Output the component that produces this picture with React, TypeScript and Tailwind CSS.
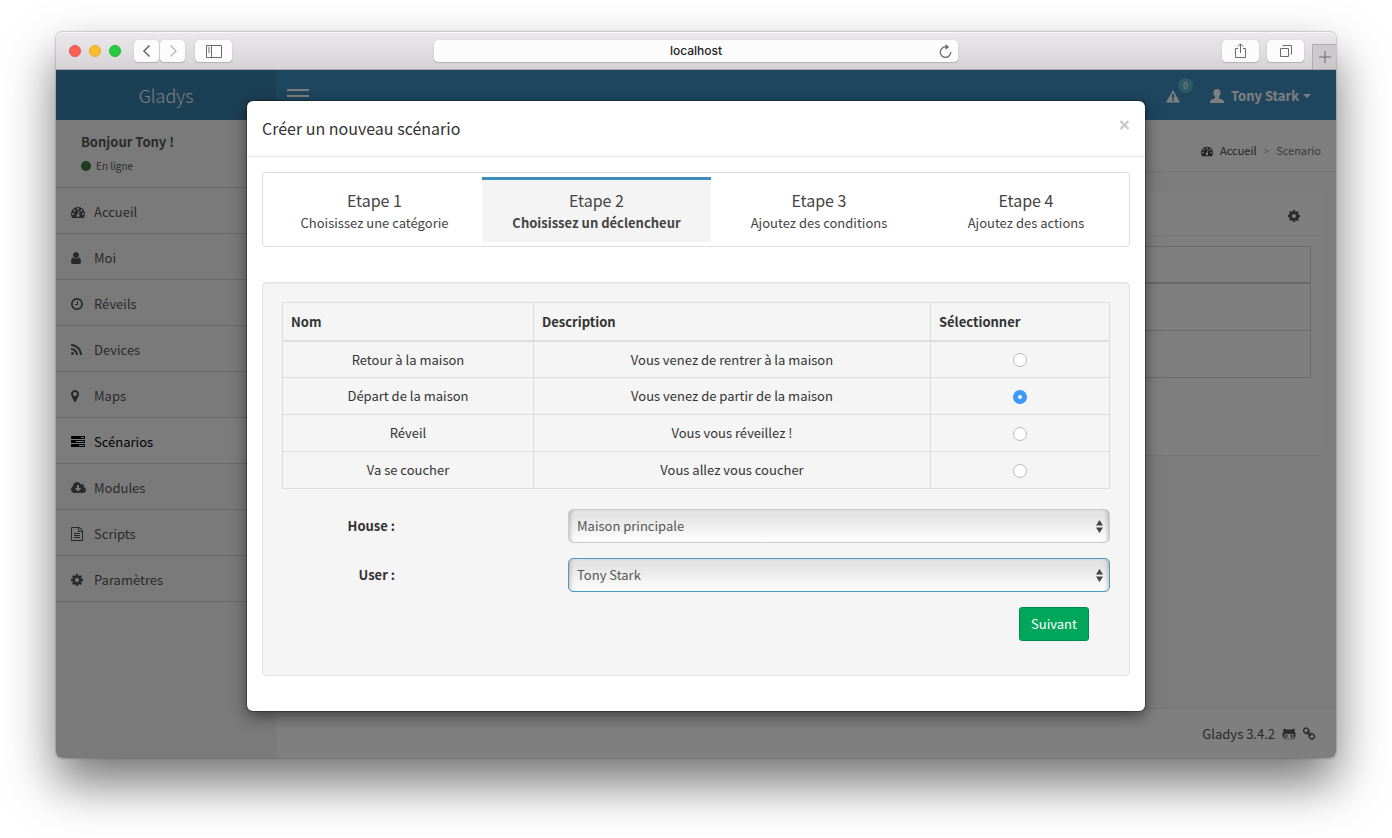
import { useState } from 'react'
import type { ReactNode } from 'react'
import { FaGithubAlt } from 'react-icons/fa'

interface GlyphProps {
  name: keyof typeof GLYPHS
  className?: string
}

// viewBox + path of each icon, 1792 units tall
const GLYPHS = {
  tachometer: {
    box: '0 0 1792 1792',
    d: 'M384 1152q0-53-37.5-90.5t-90.5-37.5-90.5 37.5-37.5 90.5 37.5 90.5 90.5 37.5 90.5-37.5 37.5-90.5zm192-448q0-53-37.5-90.5t-90.5-37.5-90.5 37.5-37.5 90.5 37.5 90.5 90.5 37.5 90.5-37.5 37.5-90.5zm428 481l101-382q6-26-7.5-48.5t-38.5-29.5-48 6.5-30 39.5l-101 382q-60 5-107 43.5t-63 98.5q-20 77 20 146t117 89 146-20 89-117q16-60-6-117t-72-91zm660-33q0-53-37.5-90.5t-90.5-37.5-90.5 37.5-37.5 90.5 37.5 90.5 90.5 37.5 90.5-37.5 37.5-90.5zm-640-640q0-53-37.5-90.5t-90.5-37.5-90.5 37.5-37.5 90.5 37.5 90.5 90.5 37.5 90.5-37.5 37.5-90.5zm448 192q0-53-37.5-90.5t-90.5-37.5-90.5 37.5-37.5 90.5 37.5 90.5 90.5 37.5 90.5-37.5 37.5-90.5zm320 448q0 261-141 483-19 29-54 29h-1402q-35 0-54-29-141-221-141-483 0-182 71-348t191-286 286-191 348-71 348 71 286 191 191 286 71 348z',
  },
  user: {
    box: '256 0 1280 1792',
    d: 'M1536 1399q0 109-62.5 187t-150.5 78h-854q-88 0-150.5-78t-62.5-187q0-85 8.5-160.5t31.5-152 58.5-131 94-89 134.5-34.5q131 128 313 128t313-128q76 0 134.5 34.5t94 89 58.5 131 31.5 152 8.5 160.5zm-256-887q0 159-112.5 271.5t-271.5 112.5-271.5-112.5-112.5-271.5 112.5-271.5 271.5-112.5 271.5 112.5 112.5 271.5z',
  },
  clock: {
    box: '128 0 1536 1792',
    d: 'M1024 544v448q0 14-9 23t-23 9h-320q-14 0-23-9t-9-23v-64q0-14 9-23t23-9h224v-352q0-14 9-23t23-9h64q14 0 23 9t9 23zm416 352q0-148-73-273t-198-198-273-73-273 73-198 198-73 273 73 273 198 198 273 73 273-73 198-198 73-273zm224 0q0 209-103 385.5t-279.5 279.5-385.5 103-385.5-103-279.5-279.5-103-385.5 103-385.5 279.5-279.5 385.5-103 385.5 103 279.5 279.5 103 385.5z',
  },
  rss: {
    box: '192 0 1408 1792',
    d: 'M576 1344q0 80-56 136t-136 56-136-56-56-136 56-136 136-56 136 56 56 136zm512 123q2 28-17 48-18 21-47 21h-135q-25 0-43-16.5t-20-41.5q-22-229-184.5-391.5t-391.5-184.5q-25-2-41.5-20t-16.5-43v-135q0-29 21-47 17-17 43-17h5q160 13 306 80.5t259 181.5q114 113 181.5 259t80.5 306zm512 2q2 27-18 47-18 20-46 20h-143q-26 0-44.5-17.5t-19.5-42.5q-12-215-101-408.5t-231.5-336-336-231.5-408.5-102q-25-1-42.5-19.5t-17.5-43.5v-143q0-28 20-46 18-18 44-18h3q262 13 501.5 120t425.5 294q187 186 294 425.5t120 501.5z',
  },
  marker: {
    box: '384 0 1024 1792',
    d: 'M1152 640q0-106-75-181t-181-75-181 75-75 181 75 181 181 75 181-75 75-181zm256 0q0 109-33 179l-364 774q-16 33-47.5 52t-67.5 19-67.5-19-46.5-52l-365-774q-33-70-33-179 0-212 150-362t362-150 362 150 150 362z',
  },
  tasks: {
    box: '0 0 1792 1792',
    d: 'M1024 1408h640v-128h-640v128zm-384-512h1024v-128h-1024v128zm640-512h384v-128h-384v128zm512 832v256q0 26-19 45t-45 19h-1664q-26 0-45-19t-19-45v-256q0-26 19-45t45-19h1664q26 0 45 19t19 45zm0-512v256q0 26-19 45t-45 19h-1664q-26 0-45-19t-19-45v-256q0-26 19-45t45-19h1664q26 0 45 19t19 45zm0-512v256q0 26-19 45t-45 19h-1664q-26 0-45-19t-19-45v-256q0-26 19-45t45-19h1664q26 0 45 19t19 45z',
  },
  cloud: {
    box: '-64 0 1920 1792',
    d: 'M1216 928q0-14-9-23t-23-9h-224v-352q0-13-9.5-22.5t-22.5-9.5h-192q-13 0-22.5 9.5t-9.5 22.5v352h-224q-13 0-22.5 9.5t-9.5 22.5q0 14 9 23l352 352q9 9 23 9t23-9l351-351q10-12 10-24zm640 224q0 159-112.5 271.5t-271.5 112.5h-1088q-185 0-316.5-131.5t-131.5-316.5q0-130 70-240t188-165q-2-30-2-43 0-212 150-362t362-150q156 0 285.5 87t188.5 231q71-62 166-62 106 0 181 75t75 181q0 76-41 138 130 31 213.5 135.5t83.5 238.5z',
  },
  file: {
    box: '128 0 1536 1792',
    d: 'M1596 380q28 28 48 76t20 88v1152q0 40-28 68t-68 28h-1344q-40 0-68-28t-28-68v-1600q0-40 28-68t68-28h896q40 0 88 20t76 48zm-444-244v376h376q-10-29-22-41l-313-313q-12-12-41-22zm384 1528v-1024h-416q-40 0-68-28t-28-68v-416h-768v1536h1280zm-1024-864q0-14 9-23t23-9h704q14 0 23 9t9 23v64q0 14-9 23t-23 9h-704q-14 0-23-9t-9-23v-64zm736 224q14 0 23 9t9 23v64q0 14-9 23t-23 9h-704q-14 0-23-9t-9-23v-64q0-14 9-23t23-9h704zm0 256q14 0 23 9t9 23v64q0 14-9 23t-23 9h-704q-14 0-23-9t-9-23v-64q0-14 9-23t23-9h704z',
  },
  cog: {
    box: '128 0 1536 1792',
    d: 'M1152 896q0-106-75-181t-181-75-181 75-75 181 75 181 181 75 181-75 75-181zm512-109v222q0 12-8 23t-20 13l-185 28q-19 54-39 91 35 50 107 138 10 12 10 25t-9 23q-27 37-99 108t-94 71q-12 0-26-9l-138-108q-44 23-91 38-16 136-29 186-7 28-36 28h-222q-14 0-24.5-8.5t-11.5-21.5l-28-184q-49-16-90-37l-141 107q-10 9-25 9-14 0-25-11-126-114-165-168-7-10-7-23 0-12 8-23 15-21 51-66.5t54-70.5q-27-50-41-99l-183-27q-13-2-21-12.5t-8-23.5v-222q0-12 8-23t19-13l186-28q14-46 39-92-40-57-107-138-10-12-10-24 0-10 9-23 26-36 98.5-107.5t94.5-71.5q13 0 26 10l138 107q44-23 91-38 16-136 29-186 7-28 36-28h222q14 0 24.5 8.5t11.5 21.5l28 184q49 16 90 37l142-107q9-9 24-9 13 0 25 10 129 119 165 170 7 8 7 22 0 12-8 23-15 21-51 66.5t-54 70.5q26 50 41 98l183 28q13 2 21 12.5t8 23.5z',
  },
  chain: {
    box: '64 0 1664 1792',
    d: 'M1456 1216q0-40-28-68l-208-208q-28-28-68-28-42 0-72 32 3 3 19 18.5t21.5 21.5 15 19 13 25.5 3.5 27.5q0 40-28 68t-68 28q-15 0-27.5-3.5t-25.5-13-19-15-21.5-21.5-18.5-19q-33 31-33 73 0 40 28 68l206 207q27 27 68 27 40 0 68-26l147-146q28-28 28-67zm-703-705q0-40-28-68l-206-207q-28-28-68-28-39 0-68 27l-147 146q-28 28-28 67 0 40 28 68l208 208q27 27 68 27 42 0 72-31-3-3-19-18.5t-21.5-21.5-15-19-13-25.5-3.5-27.5q0-40 28-68t68-28q15 0 27.5 3.5t25.5 13 19 15 21.5 21.5 18.5 19q33-31 33-73zm895 705q0 120-85 203l-147 146q-83 83-203 83-121 0-204-85l-206-207q-83-83-83-203 0-123 88-209l-88-88q-86 88-208 88-120 0-204-84l-208-208q-84-84-84-204t85-203l147-146q83-83 203-83 121 0 204 85l206 207q83 83 83 203 0 123-88 209l88 88q86-88 208-88 120 0 204 84l208 208q84 84 84 204z',
  },
} as const

const MENU: { label: string; icon: keyof typeof GLYPHS; active?: boolean }[] = [
  { label: 'Accueil', icon: 'tachometer' },
  { label: 'Moi', icon: 'user' },
  { label: 'Réveils', icon: 'clock' },
  { label: 'Devices', icon: 'rss' },
  { label: 'Maps', icon: 'marker' },
  { label: 'Scénarios', icon: 'tasks', active: true },
  { label: 'Modules', icon: 'cloud' },
  { label: 'Scripts', icon: 'file' },
  { label: 'Paramètres', icon: 'cog' },
]

const STEPS = [
  { title: 'Etape 1', text: 'Choisissez une catégorie' },
  { title: 'Etape 2', text: 'Choisissez un déclencheur' },
  { title: 'Etape 3', text: 'Ajoutez des conditions' },
  { title: 'Etape 4', text: 'Ajoutez des actions' },
]

const TRIGGERS = [
  { id: 'back-home', name: 'Retour à la maison', description: 'Vous venez de rentrer à la maison' },
  { id: 'left-home', name: 'Départ de la maison', description: 'Vous venez de partir de la maison' },
  { id: 'wake-up', name: 'Réveil', description: 'Vous vous réveillez !' },
  { id: 'going-to-sleep', name: 'Va se coucher', description: 'Vous allez vous coucher' },
]

function Glyph({ name, className = '' }: GlyphProps) {
  return (
    <svg viewBox={GLYPHS[name].box} className={`h-3.5 w-auto shrink-0 ${className}`} fill="currentColor" aria-hidden="true">
      <path d={GLYPHS[name].d} />
    </svg>
  )
}

function ChromeButton({ label, className, children }: { label: string; className: string; children: ReactNode }) {
  return (
    <button
      type="button"
      aria-label={label}
      className={`flex h-[22px] items-center justify-center rounded bg-[#fcfcfc] text-[#6b6b6b] shadow-[0_0_1px_rgba(0,0,0,0.3),0_1px_1px_rgba(0,0,0,0.15)] ${className}`}
    >
      {children}
    </button>
  )
}

function BrowserBar() {
  return (
    <div className="grid h-[38px] grid-cols-[1fr_minmax(0,524px)_1fr] items-center rounded-t-md border-b border-[#a9a7a9] bg-gradient-to-b from-[#ebe9eb] to-[#d6d3d6] pt-px shadow-[inset_0_1px_0_#f7f6f7]">
      <div className="flex items-center pl-[13px]">
        <div className="flex gap-2">
          <span className="size-3 rounded-full border border-[#e9534c] bg-[#fc5f58]" />
          <span className="size-3 rounded-full border border-[#e5a92c] bg-[#fdbe2e]" />
          <span className="size-3 rounded-full border border-[#22b537] bg-[#28cb41]" />
        </div>
        <div className="ml-[13px] flex gap-px">
          <ChromeButton label="Page précédente" className="w-[25px]">
            <svg width="14" height="14" viewBox="0 0 14 14" fill="none" stroke="currentColor" strokeWidth="1.6">
              <path d="M9.5 1.5L4 7l5.500 5.500" />
            </svg>
          </ChromeButton>
          <ChromeButton label="Page suivante" className="w-[25px]">
            <svg width="14" height="14" viewBox="0 0 14 14" fill="none" stroke="#b9b9b9" strokeWidth="1.4">
              <path d="M4.5 1.5L10 7l-5.500 5.500" />
            </svg>
          </ChromeButton>
        </div>
        <ChromeButton label="Barre latérale" className="ml-[10px] w-[37px]">
          <svg width="16" height="13" viewBox="0 0 16 13" fill="none" stroke="currentColor">
            <path d="M.5.5h15v12H.5zM5.5.5v12" />
            <path d="M2 3h2M2 5h2M2 7h2" />
          </svg>
        </ChromeButton>
      </div>
      <div className="grid h-[22px] items-center rounded bg-[#fcfcfc] shadow-[0_0_1px_rgba(0,0,0,0.3),0_1px_1px_rgba(0,0,0,0.15)]">
        <input
          type="text"
          aria-label="Adresse"
          defaultValue="localhost"
          className="col-start-1 row-start-1 w-full bg-transparent px-8 text-center font-[Inter,sans-serif] text-[12px] font-medium text-[#1d1d1d] outline-none"
        />
        <button type="button" aria-label="Recharger" className="col-start-1 row-start-1 mr-1.5 justify-self-end text-[#6b6b6b]">
          <svg width="13" height="14" viewBox="0 0 13 14" fill="none" stroke="currentColor" strokeWidth="1.3">
            <path d="M7 3A5.200 5.200 0 1 0 11.700 8" />
            <path d="M6.500 0L10.200 3 6.500 6z" fill="currentColor" stroke="none" />
          </svg>
        </button>
      </div>
      <div className="flex h-full items-center justify-end gap-2">
        <ChromeButton label="Partager" className="w-[37px]">
          <svg width="13" height="16" viewBox="0 0 13 16" fill="none" stroke="currentColor">
            <path d="M4 5.5H1.5v9h10v-9H9M6.5 10V1M3.8 3.5L6.5.8l2.700 2.700" />
          </svg>
        </ChromeButton>
        <ChromeButton label="Afficher les onglets" className="w-[37px]">
          <svg width="14" height="14" viewBox="0 0 14 14" fill="none" stroke="currentColor">
            <path d="M1.5 4.5h8v8h-8zM4 2.5v-1h8.500v8.500h-1" />
          </svg>
        </ChromeButton>
        <button
          type="button"
          aria-label="Nouvel onglet"
          className="flex h-[25px] w-6 items-center justify-center self-end border-t border-l border-[#b0aeb0] bg-[#cbc9cb] text-[#6b6b6b]"
        >
          <svg width="12" height="12" viewBox="0 0 12 12" stroke="currentColor">
            <path d="M6 0v12M0 6h12" />
          </svg>
        </button>
      </div>
    </div>
  )
}

function Sidebar() {
  return (
    <aside className="w-[220px] shrink-0 border-r border-[#f0f0f0] bg-[#f5f5f5] text-[#555]">
      <div className="h-[68px] border-b border-[#d2d2d2] pt-3 pl-[25px]">
        <p className="text-[13px] leading-5 font-bold">Bonjour Tony !</p>
        <a href="#statut" className="mt-1 flex items-center gap-[5px] text-[10px] leading-5">
          <span className="size-[10px] rounded-full bg-[#3c763d]" />
          En ligne
        </a>
      </div>
      <nav>
        {MENU.map((item) => (
          <a
            key={item.label}
            href="#menu"
            className={`flex h-[46px] items-center border-b border-[#d2d2d2] pt-0.5 pl-[15px] text-[13px] ${item.active ? 'bg-[#f9f9f9] text-black' : ''}`}
          >
            <span className="flex w-[23px]">
              <Glyph name={item.icon} />
            </span>
            {item.label}
          </a>
        ))}
      </nav>
    </aside>
  )
}

function Dashboard() {
  return (
    <div className="flex flex-col [grid-area:1/1]">
      <header className="flex h-[50px] shrink-0 text-white">
        <a href="#accueil" className="flex w-[220px] items-center justify-center bg-[#367fa9] text-[18px] font-light">
          Gladys
        </a>
        <div className="flex flex-1 items-center bg-[#3c8dbc] pt-0.5 pr-[25px]">
          <button type="button" aria-label="Menu" className="ml-[11px] flex w-[22px] flex-col gap-1">
            <span className="h-0.5 bg-white" />
            <span className="h-0.5 bg-white" />
            <span className="h-0.5 bg-white" />
          </button>
          <button type="button" aria-label="Notifications" className="relative ml-auto">
            <svg width="14" height="13" viewBox="0 0 14 13" fill="currentColor">
              <path fillRule="evenodd" d="M7 0l7 12.500H0zM6 4v4.500h2V4zM6 9.500v1.600h2V9.500z" />
            </svg>
            <span className="absolute -top-3 left-3 flex size-[15px] items-center justify-center rounded-full bg-[#5bb8d0] text-[9px] leading-none">
              0
            </span>
          </button>
          <button type="button" className="ml-[30px] flex items-center text-[13px] font-bold">
            <svg width="14" height="14" viewBox="0 0 14 14" fill="currentColor" className="mr-[7px]">
              <path d="M7 0c2.300 0 3.500 1.600 3.500 3.800 0 1.700-.8 3.400-1.700 4.200v1c1 .9 3.600 1.500 4.600 2.300.5.400.6 1.300.6 2.700H0c0-1.400.1-2.300.6-2.700 1-.8 3.600-1.400 4.600-2.300V8c-.9-.8-1.700-2.500-1.700-4.200C3.500 1.600 4.700 0 7 0z" />
            </svg>
            Tony Stark
            <svg width="8" height="4" viewBox="0 0 8 4" fill="currentColor" className="ml-1">
              <path d="M0 0h8L4 4z" />
            </svg>
          </button>
        </div>
      </header>

      <div className="flex flex-1">
        <Sidebar />
        <div className="flex flex-1 flex-col bg-[#f8f8f8] text-[#555]">
          <nav className="flex h-[52px] items-center justify-end gap-[7px] border-b border-[#e8e8e8] bg-[#fdfdfd] pt-2.5 pr-[15px] text-[11px]">
            <a href="#accueil" className="flex items-center gap-[7px] text-[#444]">
              <Glyph name="tachometer" className="max-h-3" />
              Accueil
            </a>
            <span className="text-[10px] text-[#aaa]">&gt;</span>
            <span className="text-[#777]">Scenario</span>
          </nav>
          <section className="m-[15px] mt-5 h-[264px] border-b border-[#e6e6e6] bg-white">
            <div className="flex h-11 items-center justify-end border-b border-[#f0f0f0] pt-1 pr-[21px]">
              <button type="button" aria-label="Réglages">
                <Glyph name="cog" />
              </button>
            </div>
            <div className="px-[10px] pt-[10px]">
              <div className="border border-[#d2d2d2]">
                <div className="h-[37px] border-b-2 border-[#d2d2d2]" />
                <div className="h-[47px] border-b border-[#d2d2d2]" />
                <div className="h-[46px]" />
              </div>
            </div>
          </section>
          <footer className="mt-auto flex h-[50px] items-center justify-end gap-[7px] border-t border-[#eaeaea] bg-[#fefefe] pr-5 text-[13px]">
            Gladys 3.4.2
            <a href="#github" aria-label="GitHub">
              <FaGithubAlt className="size-[14px]" />
            </a>
            <a href="#site" aria-label="Site">
              <Glyph name="chain" />
            </a>
          </footer>
        </div>
      </div>
    </div>
  )
}

interface SelectFieldProps {
  id: string
  label: string
  options: string[]
  focused?: boolean
}

function SelectField({ id, label, options, focused = false }: SelectFieldProps) {
  return (
    <div className="mb-[15px] grid grid-cols-[113fr_173fr_542fr] items-center">
      <label htmlFor={id} className="text-right text-[13px] font-bold">
        {label}
      </label>
      <div className="relative col-start-3">
        <select
          id={id}
          className={`h-[34px] w-full appearance-none rounded-[5px] border bg-gradient-to-b from-[#e4e4e4] from-20% to-white px-2 text-[13px] text-[#555] shadow-[inset_4px_0_4px_-3px_rgba(0,0,0,0.25),inset_-4px_0_4px_-3px_rgba(0,0,0,0.25)] outline-none ${focused ? 'border-[#4a9ac8]' : 'border-[#ccc]'}`}
        >
          {options.map((o) => (
            <option key={o}>{o}</option>
          ))}
        </select>
        <svg
          width="7"
          height="13"
          viewBox="0 0 7 13"
          fill="#444"
          className="pointer-events-none absolute top-[11px] right-[7px]"
          aria-hidden="true"
        >
          <path d="M3.500 0L7 5.500H0zM3.500 13L7 7.500H0z" />
        </svg>
      </div>
    </div>
  )
}

function ScenarioModal() {
  const [trigger, setTrigger] = useState('left-home')

  return (
    <div
      role="dialog"
      aria-labelledby="modal-title"
      className="w-full max-w-[898px] self-start rounded-md bg-white text-[#333] shadow-[0_5px_15px_rgba(0,0,0,0.5),0_0_1px_1px_rgba(0,0,0,0.3)]"
    >
      <div className="flex h-14 items-center justify-between border-b border-[#e5e5e5] px-[15px] pb-0.5">
        <h4 id="modal-title" className="text-[16px]">
          Créer un nouveau scénario
        </h4>
        <button type="button" aria-label="Fermer" className="mb-1.5 text-[#c8c8c8]">
          <svg width="11" height="10" viewBox="0 0 11 10" fill="none" stroke="currentColor" strokeWidth="2.4">
            <path d="M1.500 1l8 8M9.500 1l-8 8" />
          </svg>
        </button>
      </div>

      <div className="px-[15px] pt-[15px] pb-[35px]">
        <ol className="grid grid-cols-[215fr_229fr_216fr_198fr] rounded border border-[#ddd] p-1">
          {STEPS.map((step, i) => (
            <li key={step.title}>
              <a
                href="#etape"
                className={`block h-[65px] border-t-[3px] pt-[7px] text-center text-[#444] ${i === 1 ? 'border-[#3c8dbc] bg-[#f4f4f4] font-bold' : 'border-transparent'}`}
              >
                <h4 className="text-[16px] leading-[26px] font-normal">{step.title}</h4>
                <p className="text-[13px] leading-5">{step.text}</p>
              </a>
            </li>
          ))}
        </ol>

        {/* Déclencheurs + paramètres */}
        <form className="mt-[35px] rounded border border-[#e3e3e3] bg-[#f5f5f5] p-[19px] shadow-[inset_0_1px_1px_rgba(0,0,0,0.05)]">
          <table className="w-full table-fixed border-collapse text-[13px]">
            <colgroup>
              <col className="w-[251px]" />
              <col className="w-[48%]" />
              <col />
            </colgroup>
            <thead>
              <tr className="h-[38px] text-left">
                <th className="border border-b-2 border-[#ddd] px-2">Nom</th>
                <th className="border border-b-2 border-[#ddd] px-2">Description</th>
                <th className="border border-b-2 border-[#ddd] px-2">Sélectionner</th>
              </tr>
            </thead>
            <tbody>
              {TRIGGERS.map((t) => (
                <tr key={t.id} className="h-[37px] text-center">
                  <td className="border border-[#ddd]">
                    <label htmlFor={t.id}>{t.name}</label>
                  </td>
                  <td className="border border-[#ddd]">{t.description}</td>
                  <td className="border border-[#ddd] pt-0.5">
                    <input
                      id={t.id}
                      type="radio"
                      name="trigger"
                      checked={trigger === t.id}
                      onChange={() => setTrigger(t.id)}
                      className="mx-auto block size-[14px] appearance-none rounded-full border border-[#bbb] bg-white checked:border-[5px] checked:border-[#3b99fc]"
                    />
                  </td>
                </tr>
              ))}
            </tbody>
          </table>

          <div className="mt-5">
            <SelectField id="house" label="House :" options={['Maison principale']} />
            <SelectField id="user" label="User :" options={['Tony Stark']} focused />
          </div>
          <div className="mb-[15px] flex justify-end pr-[21px]">
            <button
              type="button"
              className="h-[34px] w-[70px] rounded-[3px] border border-[#008d4c] bg-[#00a65a] text-[13px] text-white"
            >
              Suivant
            </button>
          </div>
        </form>
      </div>
    </div>
  )
}

export default function App() {
  return (
    <div className="flex min-h-screen flex-col bg-white px-14 pt-8 pb-20 font-['Noto_Sans_CJK_JP','Noto_Sans',sans-serif]">
      <div className="flex flex-1 flex-col overflow-clip rounded-md shadow-[0_25px_50px_rgba(0,0,0,0.55),0_0_2px_rgba(0,0,0,0.5)]">
        <BrowserBar />
        <div className="grid flex-1">
          <Dashboard />
          <div className="relative flex justify-center bg-black/50 px-4 pt-[31px] pb-8 [grid-area:1/1]">
            <ScenarioModal />
          </div>
        </div>
      </div>
    </div>
  )
}
